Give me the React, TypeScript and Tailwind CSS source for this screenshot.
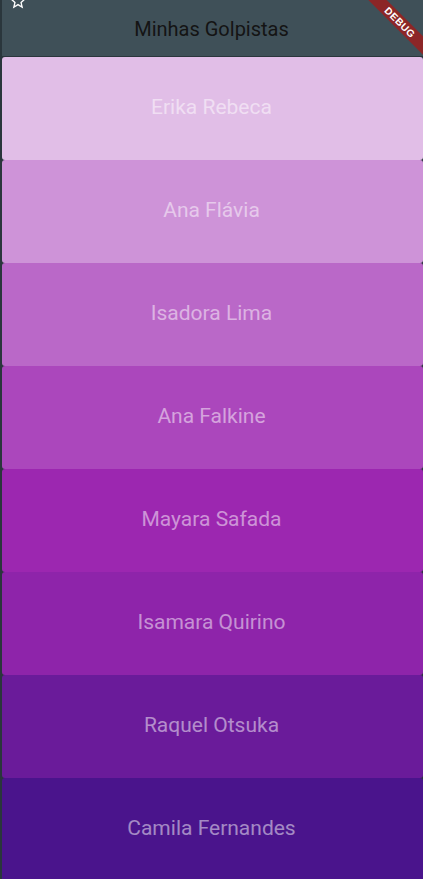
import React from "react";

const items: { name: string; bg: string }[] = [
  { name: "Erika Rebeca", bg: "bg-[#e1bee7]" },
  { name: "Ana Flávia", bg: "bg-[#ce93d8]" },
  { name: "Isadora Lima", bg: "bg-[#ba68c8]" },
  { name: "Ana Falkine", bg: "bg-[#ab47bc]" },
  { name: "Mayara Safada", bg: "bg-[#9c27b0]" },
  { name: "Isamara Quirino", bg: "bg-[#8e24aa]" },
  { name: "Raquel Otsuka", bg: "bg-[#6a1b9a]" },
  { name: "Camila Fernandes", bg: "bg-[#4a148c]" },
];

export default function App() {
  return (
    <div
      className="relative w-[423px] h-[879px] overflow-hidden bg-[#2a363c]"
      style={{ fontFamily: "Roboto, 'Noto Sans', sans-serif" }}
    >
      <header className="relative h-[56px] ml-[2px] bg-[#3f5058] flex items-center justify-center">
        <svg
          className="absolute left-[6px] top-[-9px]"
          width="20"
          height="20"
          viewBox="0 0 24 24"
          fill="white"
        >
          <path d="M22 9.24l-7.19-.62L12 2 9.19 8.63 2 9.24l5.46 4.73L5.82 21 12 17.27 18.18 21l-1.63-7.03L22 9.24zM12 15.4l-3.76 2.27 1-4.28-3.32-2.88 4.38-.38L12 6.1l1.71 4.04 4.38.38-3.32 2.88 1 4.28L12 15.4z" />
        </svg>
        <h1 className="text-[20px] leading-none text-[#141414] mt-[2px] -ml-[2px]">Minhas Golpistas</h1>
      </header>
      <div className="flex flex-col ml-[2px] mt-[1px]">
        {items.map((it) => (
          <div
            key={it.name}
            className={`${it.bg} h-[103px] rounded-[3px] flex items-center justify-center shrink-0`}
          >
            <span className="text-[21px] leading-none text-white/50 -mt-[3px] -ml-[2px]">{it.name}</span>
          </div>
        ))}
      </div>
      <div className="absolute top-[16px] right-[-37px] w-[120px] h-[13px] rotate-45 bg-[#a01c1c]/80 flex items-center justify-center">
        <span
          className="text-[10px] font-bold text-white tracking-[0.5px] leading-none"
          style={{ fontFamily: "'Liberation Sans', sans-serif" }}
        >
          DEBUG
        </span>
      </div>
    </div>
  );
}
